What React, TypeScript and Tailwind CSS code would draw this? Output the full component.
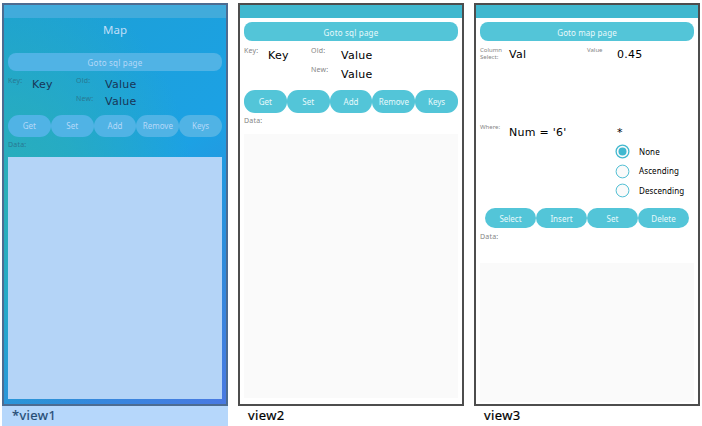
import React from 'react';

const sans = "font-['Noto_Sans','Open_Sans',sans-serif]";
const dejavu = "font-['DejaVu_Sans',sans-serif]";

function Phone({ children, active = false }: { children: React.ReactNode; active?: boolean }) {
  return (
    <div
      className={`flex h-[403px] w-[226px] flex-col border-2 ${
        active
          ? 'border-[#4d6c91] bg-[radial-gradient(ellipse_190px_230px_at_0%_48%,#2aafb9_0%,#2aafb9b3_40%,#2aafb900_100%),linear-gradient(140deg,#1ca0d4_0%,#1ca1e4_50%,#2f8cdb_75%,#4a79e2_100%)]'
          : 'border-[#4d4d4d] bg-white'
      }`}
    >
      {children}
    </div>
  );
}

function Bar({ active = false }: { active?: boolean }) {
  return <div className={`h-[13px] shrink-0 ${active ? 'bg-[#41abdb]' : 'bg-[#40b8cf]'}`} />;
}

function Pill({ children, className }: { children: React.ReactNode; className: string }) {
  return (
    <div className={`flex shrink-0 items-center justify-center whitespace-nowrap text-[8px] leading-none ${sans} ${className}`}>
      {children}
    </div>
  );
}

function Label({ children, className }: { children: React.ReactNode; className: string }) {
  return <div className={`shrink-0 whitespace-nowrap text-[7px] leading-[8px] tracking-[0.2px] ${sans} ${className}`}>{children}</div>;
}

function SmallLabel({ children, className }: { children: React.ReactNode; className: string }) {
  return <div className={`shrink-0 text-[6px] leading-[7px] text-[#858585] ${sans} ${className}`}>{children}</div>;
}

function Value({ children, className = '' }: { children: React.ReactNode; className?: string }) {
  return <div className={`shrink-0 whitespace-nowrap text-[11px] leading-[12px] tracking-[0.25px] ${dejavu} ${className}`}>{children}</div>;
}

const actions = ['Get', 'Set', 'Add', 'Remove', 'Keys'];
const sqlActions = ['Select', 'Insert', 'Set', 'Delete'];
const orders = ['None', 'Ascending', 'Descending'];

function MapView() {
  return (
    <Phone active>
      <Bar active />
      <div className={`flex h-[35px] items-start justify-center pt-[5px] text-[11.5px] leading-[13px] text-[#c0def8] ${sans}`}>Map</div>
      <div className="flex flex-1 flex-col px-1">
        <Pill className="h-[18px] rounded-[8px] bg-[#50b3e5] pt-[2px] tracking-[0.2px] text-[#b5d8f8]">Goto sql page</Pill>
        <div className="flex h-[44px] text-[#183557]">
          <Label className="w-[24px] pt-[6px] text-[#287892]">Key:</Label>
          <Value className="w-[44px] pt-[8px]">Key</Value>
          <div>
            <div className="flex h-[18px]">
              <Label className="w-[29px] pt-[6px] text-[#287892]">Old:</Label>
              <Value className="pt-[8px]">Value</Value>
            </div>
            <div className="flex">
              <Label className="w-[29px] pt-[6px] text-[#287892]">New:</Label>
              <Value className="pt-[7px]">Value</Value>
            </div>
          </div>
        </div>
        <div className="flex">
          {actions.map((a) => (
            <Pill key={a} className="h-[22px] w-[42.8px] rounded-[11px] bg-[#50b3e5] text-[#b5d8f8]">{a}</Pill>
          ))}
        </div>
        <Label className="h-[20px] pt-[4px] text-[#287892]">Data:</Label>
        <div className="h-[242px] bg-[#b4d4f7]" />
      </div>
    </Phone>
  );
}

function KeyValueView() {
  return (
    <Phone>
      <Bar />
      <div className="flex flex-1 flex-col px-1 pt-1">
        <Pill className="h-[19px] rounded-[8px] bg-[#53c5d8] pt-[2px] tracking-[0.2px] text-[#e8f9fb]">Goto sql page</Pill>
        <div className="flex h-[49px] text-black">
          <Label className="w-[24px] pt-[6px] text-[#858585]">Key:</Label>
          <Value className="w-[43px] pt-[9px]">Key</Value>
          <div>
            <div className="flex h-[19px]">
              <Label className="w-[30px] pt-[6px] text-[#858585]">Old:</Label>
              <Value className="pt-[9px]">Value</Value>
            </div>
            <div className="flex">
              <Label className="w-[30px] pt-[6px] text-[#858585]">New:</Label>
              <Value className="pt-[9px]">Value</Value>
            </div>
          </div>
        </div>
        <div className="flex">
          {actions.map((a) => (
            <Pill key={a} className="h-[23px] w-[42.8px] rounded-[11px] bg-[#53c5d8] text-[#e8f9fb]">{a}</Pill>
          ))}
        </div>
        <Label className="h-[21px] pt-[4px] text-[#858585]">Data:</Label>
        <div className="h-[264px] bg-[#fafafa]" />
      </div>
    </Phone>
  );
}

function SqlView() {
  return (
    <Phone>
      <Bar />
      <div className="flex flex-1 flex-col px-1 pt-1">
        <Pill className="h-[19px] rounded-[8px] bg-[#53c5d8] pt-[2px] tracking-[0.1px] text-[#e8f9fb]">Goto map page</Pill>
        <div className="flex h-[78px] text-black">
          <SmallLabel className="w-[29px] pt-[6px]">
            Column<br />Select:
          </SmallLabel>
          <Value className="w-[78px] pt-[8px]">Val</Value>
          <SmallLabel className="w-[30px] pt-[6px]">Value</SmallLabel>
          <Value className="pt-[8px]">0.45</Value>
        </div>
        <div className="flex h-[20px] text-black">
          <SmallLabel className="w-[29px] pt-[5px]">Where:</SmallLabel>
          <Value className="w-[108px] pt-[8px]">Num = '6'</Value>
          <Value className="pt-[8px]">*</Value>
        </div>
        <div className="flex h-[69px] flex-col pl-[135px] pt-[3px]">
          {orders.map((o, i) => (
            <div key={o} className="flex h-[19.5px] shrink-0 items-center">
              <svg className="h-[15px] w-[15px]" viewBox="0 0 15 15">
                <circle cx="7.5" cy="7.5" r="6.4" fill="#fafafa" stroke="#40b8cf" strokeWidth={i === 0 ? 1.3 : 0.9} />
                {i === 0 && <circle cx="7.5" cy="7.5" r="4" fill="#40b8cf" />}
              </svg>
              <span className={`ml-[9px] text-[8px] leading-none tracking-[0.1px] text-black ${sans}`}>{o}</span>
            </div>
          ))}
        </div>
        <div className="flex pl-[5px]">
          {sqlActions.map((a) => (
            <Pill key={a} className="h-[20px] w-[51px] rounded-[10px] bg-[#53c5d8] pt-[2px] text-[#e8f9fb]">{a}</Pill>
          ))}
        </div>
        <Label className="h-[35px] pt-[5px] text-[#858585]">Data:</Label>
        <div className="h-[139px] bg-[#fafafa]" />
      </div>
    </Phone>
  );
}

export default function App() {
  const caption = `h-5 pl-[10px] text-[13px] leading-[18px] tracking-[0.4px] [-webkit-text-stroke:0.2px] ${sans}`;
  return (
    <div className="flex h-[426px] w-[702px] gap-[10px] overflow-hidden bg-white pl-[2px] pt-[3px]">
      <div className="shrink-0">
        <MapView />
        <div className={`${caption} bg-[#b6d7fb] text-[#244b73]`}>*view1</div>
      </div>
      <div className="shrink-0">
        <KeyValueView />
        <div className={`${caption} text-black`}>view2</div>
      </div>
      <div className="shrink-0">
        <SqlView />
        <div className={`${caption} text-black`}>view3</div>
      </div>
    </div>
  );
}
